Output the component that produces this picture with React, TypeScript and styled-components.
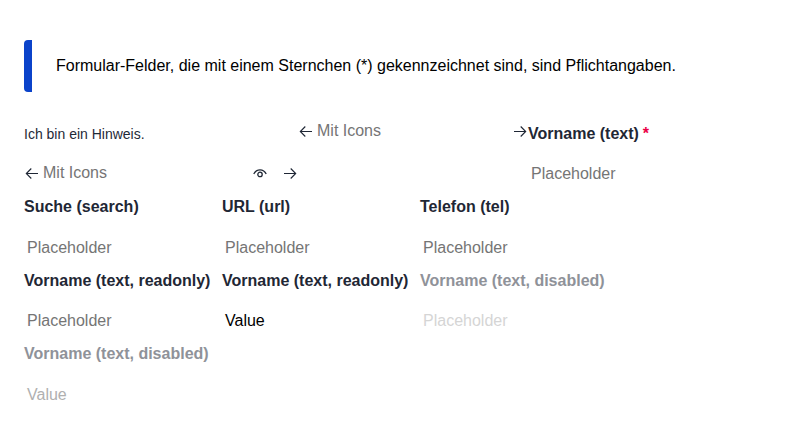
import React from "react";
import styled, { createGlobalStyle } from "styled-components";

const Global = createGlobalStyle`
  body { margin: 0; background: #fff; }
  * { box-sizing: border-box; }
`;
const Page = styled.main`
  width: 800px; height: 441px; padding: 40px 24px 0;
  font: 16px/20px "Liberation Sans", Arial, sans-serif; color: #000;
`;
const Notice = styled.div`
  height: 52px; display: flex; align-items: center; padding-left: 24px;
  border-left: 8px solid #0b43ca; border-radius: 4px;
`;
const IconRow = styled.div<{ $columns: string; $top?: number; $height: number }>`
  display: grid; grid-template-columns: ${(p) => p.$columns};
  padding-top: ${(p) => p.$top ?? 0}px; height: ${(p) => p.$height}px; white-space: nowrap;
`;
const Hint = styled.span`
  font-size: 14px; color: #1f2937; padding-top: 3px;
`;
const Group = styled.div`
  display: flex; align-items: flex-start; padding-left: 1px;
`;
const Placeholder = styled.span<{ $color?: string; $top?: number; $left?: number }>`
  color: ${(p) => p.$color ?? "#757575"};
  margin-top: ${(p) => p.$top ?? 0}px;
  margin-left: ${(p) => p.$left ?? 3}px;
`;
const Label = styled.label<{ $disabled?: boolean }>`
  font-weight: 700; white-space: nowrap;
  color: ${(p) => (p.$disabled ? "#8f9299" : "#1f2735")};
`;
const RequiredLabel = styled(Label)`
  margin-top: 3px; margin-left: 1px;
`;
const Star = styled.span`
  color: #eb0045; margin-left: 4px;
`;
const Fields = styled.div`
  display: grid; grid-template-columns: repeat(3, 198px); grid-template-rows: 74px 73px 74px;
`;
const Field = styled.div<{ $gap: number }>`
  display: flex; flex-direction: column; gap: ${(p) => p.$gap}px;
`;
const Icon = styled.svg<{ $left?: number }>`
  width: 14px; height: 14px; flex: none;
  margin-top: 4px; margin-left: ${(p) => p.$left ?? 0}px;
  fill: none; stroke: #1f2735; stroke-width: 1.1;
`;
const Arrow = ({ right, left }: { right?: boolean; left?: number }) => (
  <Icon viewBox="0 0 14 14" $left={left}>
    <path d={right ? "M1 6.5H12.6M7.7 1.5l5 5-5 5" : "M13 6.5H1.4M6.3 1.5l-5 5 5 5"} />
  </Icon>
);
const Eye = () => (
  <Icon viewBox="0 0 14 14">
    <path d="M.8 7C2.2 4 4.200 2.800 7 2.800S11.800 4 13.200 7" strokeWidth="1.3" />
    <circle cx="7" cy="7.400" r="2.200" strokeWidth="1.3" />
  </Icon>
);
const fields = [
  { label: "Suche (search)", text: "Placeholder", gap: 21 },
  { label: "URL (url)", text: "Placeholder", gap: 21 },
  { label: "Telefon (tel)", text: "Placeholder", gap: 21 },
  { label: "Vorname (text, readonly)", text: "Placeholder", gap: 20 },
  { label: "Vorname (text, readonly)", text: "Value", gap: 20, color: "#000" },
  { label: "Vorname (text, disabled)", text: "Placeholder", gap: 20, disabled: true, color: "#d5d5d5" },
  { label: "Vorname (text, disabled)", text: "Value", gap: 21, disabled: true, color: "#b0b0b0" },
];
export default function App() {
  return (
    <><Global /><Page>
      <Notice>Formular-Felder, die mit einem Sternchen (*) gekennzeichnet sind, sind Pflichtangaben.</Notice>
      <IconRow $columns="274px 215px 1fr" $top={29} $height={71}>
        <Hint>Ich bin ein Hinweis.</Hint>
        <Group><Arrow /><Placeholder $left={4}>Mit Icons</Placeholder></Group>
        <Group><Arrow right left={-1} /><RequiredLabel>Vorname (text)<Star>*</Star></RequiredLabel></Group>
      </IconRow>
      <IconRow $columns="229px 30px 245px 1fr" $height={34}>
        <Group><Arrow /><Placeholder $left={4}>Mit Icons</Placeholder></Group>
        <Eye /><Arrow right /><Placeholder $top={1}>Placeholder</Placeholder>
      </IconRow>
      <Fields>
        {fields.map((f, i) => (
          <Field key={i} $gap={f.gap}><Label $disabled={f.disabled}>{f.label}</Label><Placeholder $color={f.color}>{f.text}</Placeholder></Field>
        ))}
      </Fields>
    </Page></>
  );
}
